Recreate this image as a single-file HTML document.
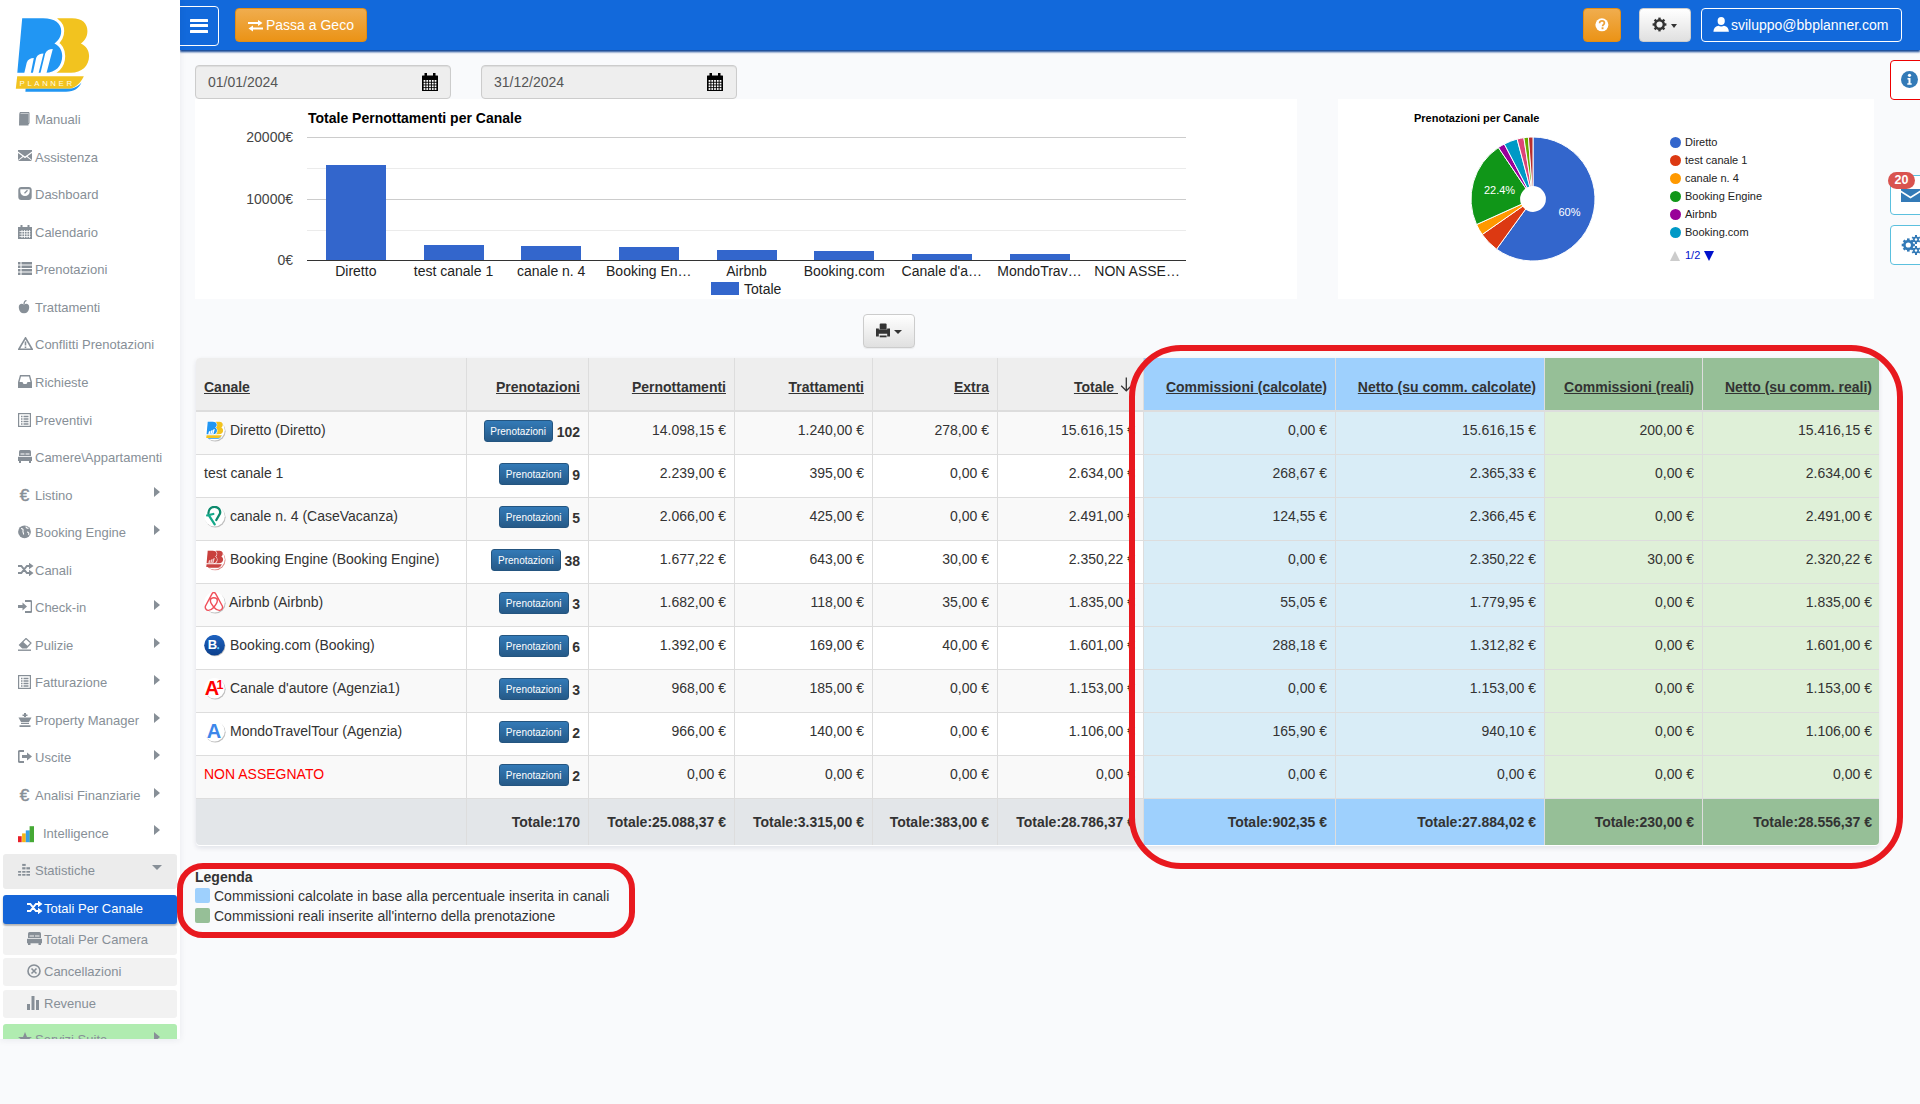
<!DOCTYPE html>
<html><head><meta charset="utf-8"><title>BB Planner</title>
<style>
*{box-sizing:border-box;}
html,body{margin:0;padding:0;}
body{width:1920px;height:1104px;overflow:hidden;position:relative;background:#f9fafc;font-family:"Liberation Sans",sans-serif;font-size:14px;color:#333;}
.abs{position:absolute;}
svg{display:block;}
#sb{position:absolute;left:0;top:0;width:180px;height:1039px;background:#fff;z-index:4;overflow:hidden;box-shadow:0 1px 7px rgba(20,30,60,0.07);}
.mi{position:absolute;left:0;width:180px;height:20px;font-size:13px;line-height:20px;color:#878f97;white-space:nowrap;}
.mi .ic{position:absolute;left:18px;top:2px;}
.mi .tx{position:absolute;left:35px;top:0;}
.mi .ch{position:absolute;left:154px;top:1.9px;width:0;height:0;border-left:6px solid #878f97;border-top:5.5px solid transparent;border-bottom:5.5px solid transparent;}
.sub{position:absolute;left:3px;width:174px;border-radius:3px;background:#f2f2f2;}
#tb{position:absolute;left:180px;top:0;width:1740px;height:50px;background:#1269db;box-shadow:0 2px 2px rgb(18,70,150);z-index:3;}
.btnw{border-radius:4px;background:linear-gradient(#f0ad4e,#eb9316);border:1px solid #e38d13;}
.btnd{border-radius:4px;background:linear-gradient(#fff,#e0e0e0);border:1px solid #ccc;}
</style></head><body>
<div id="sb">
<svg class="abs" style="left:0;top:0" width="100" height="100" viewBox="0 0 100 100">
<path d="M57.5 18.2 H72 C82.5 18.2 87.4 23.5 87.4 31 C87.4 37 84.5 41 80.9 43.4 C86 46 89.1 50 89.1 56 C89.1 66 81.5 72.8 71 72.8 H45 Z" fill="#f2c31f"/>
<path d="M22.2 18.2 H43 C55 18.2 61.2 23.5 61.2 31 C61.2 37 58 41 54.4 43.4 C59.5 46 62.2 50 62.2 56 C62.2 66 55.5 72.8 45.5 72.8 H17.3 Z" fill="#2196f3" stroke="#fff" stroke-width="6" stroke-linejoin="round"/>
<path d="M22.2 18.2 H43 C55 18.2 61.2 23.5 61.2 31 C61.2 37 58 41 54.4 43.4 C59.5 46 62.2 50 62.2 56 C62.2 66 55.5 72.8 45.5 72.8 H17.3 Z" fill="#2196f3"/>
<path d="M24.3 73 L26.7 62.7 C27.8 59.5 30.5 58.3 33.8 58.1 L30.8 73 Z M32.9 73 L36.2 57.8 C37.5 54.8 40.3 53.6 43.5 53.5 L38.6 73 Z M40.5 73 L45.2 53.5 C46.5 50.5 49.5 49.2 52.8 49.1 L46.5 73 Z" fill="#fff"/>
<path d="M17.2 76.3 H83.8 C80.5 83 76.5 87 70 88.8 H15.8 Z" fill="#f2c31f"/>
<path d="M25.6 88.8 H70 C75 88 79 85.5 81.5 82.5 C79 88 74.5 91.8 66 91.8 H25.4 Z" fill="#2196f3"/>
<text x="19.6" y="85.6" font-family="Liberation Sans" font-size="7.8" letter-spacing="2.6" fill="#fffbe8">PLANNER</text>
</svg>
<div class="mi" style="top:110.10px"><span class="ic" ><svg width="13" height="14" viewBox="0 0 13 14"><path d="M2 0.5h9v11h-9z" fill="none" stroke="#878f97" stroke-width="1"/><path d="M1.5 1.5 L1 13.5 h9.5 v-12z" fill="#878f97"/></svg></span><span class="tx" >Manuali</span></div>
<div class="mi" style="top:147.65px"><span class="ic" ><svg width="14" height="11" viewBox="0 0 14 11"><path d="M0 0h14v1.5l-7 5-7-5z" fill="#878f97"/><path d="M0 3l4.5 3.3L0 10zM14 3l-4.5 3.3L14 10zM0 11l5.3-4 1.7 1.2 1.7-1.2 5.3 4z" fill="#878f97"/></svg></span><span class="tx" >Assistenza</span></div>
<div class="mi" style="top:185.20px"><span class="ic" ><svg width="14" height="14" viewBox="0 0 14 14"><rect x="0.3" y="0" width="13.4" height="13" rx="3" fill="#878f97"/><path d="M2.3 2.3h9.4v2.5a4.7 4.2 0 0 1-9.4 0z" fill="#fff"/><path d="M6.5 6.2l3-3" stroke="#878f97" stroke-width="1.3"/></svg></span><span class="tx" >Dashboard</span></div>
<div class="mi" style="top:222.75px"><span class="ic" ><svg width="14" height="14" viewBox="0 0 14 14"><rect x="0" y="2" width="14" height="12" fill="#878f97"/><rect x="2.5" y="0" width="2" height="3" fill="#878f97"/><rect x="9.5" y="0" width="2" height="3" fill="#878f97"/><path d="M1.5 6.5h11M1.5 9h11M1.5 11.5h11M4 5v8M6.5 5v8M9 5v8M11.5 5v8" stroke="#fff" stroke-width="0.8"/></svg></span><span class="tx" >Calendario</span></div>
<div class="mi" style="top:260.30px"><span class="ic" ><svg width="14" height="13" viewBox="0 0 14 13"><path d="M0 0h2.5v2.5H0zM0 3.5h2.5V6H0zM0 7h2.5v2.5H0zM0 10.5h2.5V13H0z" fill="#878f97"/><path d="M3.5 0h10.5v2.5H3.5zM3.5 3.5h10.5V6H3.5zM3.5 7h10.5v2.5H3.5zM3.5 10.5h10.5V13H3.5z" fill="#878f97"/></svg></span><span class="tx" >Prenotazioni</span></div>
<div class="mi" style="top:297.85px"><span class="ic" ><svg width="12" height="14" viewBox="0 0 12 14"><path d="M6 4.5C4 3 0.5 3.5 0.8 7.5 1 11 3.5 14 6 13c2.5 1 5-2 5.2-5.5C11.5 3.5 8 3 6 4.5z" fill="#878f97"/><path d="M6 4.2C6 2 7 0.8 8.5 0.5" stroke="#878f97" stroke-width="1.2" fill="none"/></svg></span><span class="tx" >Trattamenti</span></div>
<div class="mi" style="top:335.40px"><span class="ic" ><svg width="15" height="13" viewBox="0 0 15 13"><path d="M7.5 0.8L0.8 12.3h13.4z" fill="none" stroke="#878f97" stroke-width="1.6"/><path d="M7.5 4.5v4M7.5 9.5v1.5" stroke="#878f97" stroke-width="1.6"/></svg></span><span class="tx" >Conflitti Prenotazioni</span></div>
<div class="mi" style="top:372.95px"><span class="ic" ><svg width="14" height="13" viewBox="0 0 14 13"><path d="M2 0h10l2 7v6H0V7z" fill="#878f97"/><path d="M3 1.5h8l1.5 5.5H9.5L8.5 9h-3l-1-2H1.5z" fill="#fff"/></svg></span><span class="tx" >Richieste</span></div>
<div class="mi" style="top:410.50px"><span class="ic" ><svg width="13" height="14" viewBox="0 0 13 14"><rect x="0.6" y="0.6" width="11.8" height="12.8" fill="none" stroke="#878f97" stroke-width="1.2"/><path d="M3 3.5h1.5M5.5 3.5h5M3 6h1.5M5.5 6h5M3 8.5h1.5M5.5 8.5h5M3 11h1.5M5.5 11h5" stroke="#878f97" stroke-width="1.3"/></svg></span><span class="tx" >Preventivi</span></div>
<div class="mi" style="top:448.05px"><span class="ic" ><svg width="14" height="13" viewBox="0 0 14 13"><path d="M1 1.5Q1 0 2.5 0h9Q13 0 13 1.5V6H1z" fill="#878f97"/><path d="M0 6.8h14v4.2H0z" fill="#878f97"/><path d="M1 11h2v2H1zM11 11h2v2h-2z" fill="#878f97"/><path d="M2.5 4h4M7.5 4h4" stroke="#fff" stroke-width="1"/></svg></span><span class="tx" >Camere\Appartamenti</span></div>
<div class="mi" style="top:485.60px"><span class="ic" ><svg width="14" height="15" viewBox="0 0 14 15"><text x="6.6" y="12.7" text-anchor="middle" font-family="Liberation Sans" font-size="17" stroke="#878f97" stroke-width="0.5" fill="#878f97">€</text></svg></span><span class="tx" >Listino</span><span class="ch"></span></div>
<div class="mi" style="top:523.15px"><span class="ic" ><svg width="14" height="14" viewBox="0 0 14 14"><circle cx="6.5" cy="6.8" r="6.4" fill="#878f97"/><path d="M3 3.5c1.5 0 2.5 1 2 2.5s1 2 0.5 3.5M8 1.5c0 1.5 1.5 2 2.5 1.5M9 7c1.5 0 2.5 1.5 1.5 3" stroke="#fff" stroke-width="1.1" fill="none"/></svg></span><span class="tx" >Booking Engine</span><span class="ch"></span></div>
<div class="mi" style="top:560.70px"><span class="ic" ><svg width="16" height="13" viewBox="0 0 16 13"><path d="M0 3h3.3l5.6 7h3M0 10h3.3l5.6-7h3" stroke="#878f97" stroke-width="2" fill="none"/><path d="M11 -0.3l4.5 3.3-4.5 3.3zM11 6.7l4.5 3.3-4.5 3.3z" fill="#878f97"/></svg></span><span class="tx" >Canali</span></div>
<div class="mi" style="top:598.25px"><span class="ic" ><svg width="14" height="13" viewBox="0 0 14 13"><path d="M7 1h5.5q1.2 0 1.2 1.2v8.6q0 1.2-1.2 1.2H7" stroke="#878f97" stroke-width="2" fill="none"/><path d="M0 5h4.5V2.5L9 6.5l-4.5 4V8H0z" fill="#878f97"/></svg></span><span class="tx" >Check-in</span><span class="ch"></span></div>
<div class="mi" style="top:635.80px"><span class="ic" ><svg width="14" height="13" viewBox="0 0 14 13"><path d="M8 0.5l5 4.5-4.5 5h-4L1.5 7z" fill="none" stroke="#878f97" stroke-width="1.2"/><path d="M1.5 7l3 3h4l1.5-1.7L5 3.8z" fill="#878f97"/><path d="M0 12.2h13" stroke="#878f97" stroke-width="1.4"/></svg></span><span class="tx" >Pulizie</span><span class="ch"></span></div>
<div class="mi" style="top:673.35px"><span class="ic" ><svg width="13" height="14" viewBox="0 0 13 14"><rect x="0.6" y="0.6" width="11.8" height="12.8" fill="none" stroke="#878f97" stroke-width="1.2"/><path d="M3 3.5h1.5M5.5 3.5h5M3 6h1.5M5.5 6h5M3 8.5h1.5M5.5 8.5h5M3 11h1.5M5.5 11h5" stroke="#878f97" stroke-width="1.3"/></svg></span><span class="tx" >Fatturazione</span><span class="ch"></span></div>
<div class="mi" style="top:710.90px"><span class="ic" ><svg width="14" height="14" viewBox="0 0 14 14"><path d="M6 0h2v1.5h1.5v1.5H8v1H6V3H4.5V1.5H6z" fill="#878f97"/><path d="M0.5 4.5h13l-2.5 4.5H3z" fill="#878f97"/><path d="M3 9.8h8v1.2H3zM1.5 12.3h11V14h-11z" fill="#878f97"/></svg></span><span class="tx" >Property Manager</span><span class="ch"></span></div>
<div class="mi" style="top:748.45px"><span class="ic" ><svg width="14" height="13" viewBox="0 0 14 13"><path d="M6 1H1.8Q0.7 1 0.7 2.2v8.6Q0.7 12 1.8 12H6" stroke="#878f97" stroke-width="1.8" fill="none"/><path d="M4 5h5V2.5l5 4-5 4V8H4z" fill="#878f97"/></svg></span><span class="tx" >Uscite</span><span class="ch"></span></div>
<div class="mi" style="top:786.00px"><span class="ic" ><svg width="14" height="15" viewBox="0 0 14 15"><text x="6.6" y="12.7" text-anchor="middle" font-family="Liberation Sans" font-size="17" stroke="#878f97" stroke-width="0.5" fill="#878f97">€</text></svg></span><span class="tx" >Analisi Finanziarie</span><span class="ch"></span></div>
<div class="mi" style="top:823.55px"><span class="ic" style="left:18px;top:2px"><svg width="17" height="17" viewBox="0 0 17 17"><path d="M0 10.2h3.7v6H0z" fill="#e8202a"/><path d="M4.1 7.4h3.7v8.8H4.1z" fill="#f7b515"/><path d="M7.8 4.4h4v11.8h-4z" fill="#3a9fe6"/><path d="M11.6 0.2h4.4v16h-4.4z" fill="#45a935"/></svg></span><span class="tx" style="left:43px">Intelligence</span><span class="ch"></span></div>
<div class="sub" style="top:854px;height:34.5px;background:#ececec"></div>
<div class="mi" style="top:861.10px"><span class="ic"><svg width="14" height="14" viewBox="0 0 14 14"><g fill="#878f97"><rect x="4.2" y="0.9" width="3.5" height="2"/><rect x="4.2" y="4.2" width="3.3" height="2.2"/><rect x="8.4" y="4.2" width="3.6" height="2.2"/><rect x="0.1" y="8" width="3" height="1.7"/><rect x="4.2" y="8" width="3.3" height="1.7"/><rect x="8.4" y="8" width="3.6" height="1.7"/><rect x="0.1" y="11" width="3" height="1.7"/><rect x="4.2" y="11" width="3.3" height="1.7"/><rect x="8.4" y="11" width="3.6" height="1.7"/></g></svg></span><span class="tx">Statistiche</span><span style="position:absolute;left:151.8px;top:4.3px;width:0;height:0;border-top:5.6px solid #878f97;border-left:5.1px solid transparent;border-right:5.1px solid transparent"></span></div>
<div class="sub" style="top:895.2px;height:28.5px;background:#1565d8;box-shadow:0 2px 2px rgba(0,0,0,0.3);"></div>
<div class="mi" style="top:898.95px;color:#fff"><span class="ic" style="left:27px"><svg width="16" height="13" viewBox="0 0 16 13"><path d="M0 3h3.3l5.6 7h3M0 10h3.3l5.6-7h3" stroke="#fff" stroke-width="2" fill="none"/><path d="M11 -0.3l4.5 3.3-4.5 3.3zM11 6.7l4.5 3.3-4.5 3.3z" fill="#fff"/></svg></span><span class="tx" style="left:44px">Totali Per Canale</span></div>
<div class="sub" style="top:926.5px;height:28.0px;background:#f2f2f2;"></div>
<div class="mi" style="top:930.25px;color:#878f97"><span class="ic" style="left:27px"><svg width="15" height="14" viewBox="0 0 15 14"><path d="M1 1.5Q1 0 2.5 0h10Q14 0 14 1.5V6H1z" fill="#878f97"/><path d="M0 6.8h15v4.5H0z" fill="#878f97"/><path d="M1 11h2.5v2H1zM11.5 11h2.5v2h-2.5z" fill="#878f97"/><path d="M2.5 4h4.5M8 4h4.5" stroke="#f2f2f2" stroke-width="1"/></svg></span><span class="tx" style="left:44px">Totali Per Camera</span></div>
<div class="sub" style="top:957.9px;height:28.5px;background:#f2f2f2;"></div>
<div class="mi" style="top:961.95px;color:#878f97"><span class="ic" style="left:27px"><svg width="14" height="14" viewBox="0 0 14 14"><circle cx="7" cy="7" r="6" fill="none" stroke="#878f97" stroke-width="1.6"/><path d="M4.5 4.5l5 5M9.5 4.5l-5 5" stroke="#878f97" stroke-width="1.6"/></svg></span><span class="tx" style="left:44px">Cancellazioni</span></div>
<div class="sub" style="top:989.9px;height:27.9px;background:#f2f2f2;"></div>
<div class="mi" style="top:994.15px;color:#878f97"><span class="ic" style="left:27px"><svg width="12" height="14" viewBox="0 0 12 14"><path d="M0 8h3v6H0zM4.5 0h3v14h-3zM9 4h3v10H9z" fill="#878f97"/></svg></span><span class="tx" style="left:44px">Revenue</span></div>
<div class="sub" style="top:1024px;height:20px;background:#b0ecb0"></div>
<div class="mi" style="top:1030.25px"><span class="ic"><svg width="14" height="14" viewBox="0 0 14 14"><path d="M7 0l2 5h5l-4 3 1.5 5L7 10l-4.5 3L4 8 0 5h5z" fill="#878f97"/></svg></span><span class="tx">Servizi Suite</span><span class="ch"></span></div>
</div>
<div id="tb">
<div class="abs" style="left:0;top:0;width:40px;height:50px;overflow:hidden"><div class="abs" style="left:-6px;top:6px;width:45px;height:40px;border:1px solid #fff;border-radius:4px"></div></div>
<div class="abs" style="left:10px;top:18.8px;width:18px;height:3px;background:#fff;border-radius:0.5px"></div>
<div class="abs" style="left:10px;top:24.1px;width:18px;height:3px;background:#fff;border-radius:0.5px"></div>
<div class="abs" style="left:10px;top:29.9px;width:18px;height:3px;background:#fff;border-radius:0.5px"></div>
<div class="abs btnw" style="left:55px;top:8px;width:132px;height:34px"></div>
<svg class="abs" style="left:67.5px;top:19.5px" width="15" height="12" viewBox="0 0 15 12"><path d="M0 3h11" stroke="#fff" stroke-width="2"/><path d="M10 0l4.5 3-4.5 3z" fill="#fff"/><path d="M4 8.5h11" stroke="#fff" stroke-width="2"/><path d="M5 5.5L0.5 8.5 5 11.5z" fill="#fff"/></svg>
<div class="abs" style="left:86px;top:16px;line-height:18px;color:#fff;font-size:14px">Passa a Geco</div>
<div class="abs btnw" style="left:1403px;top:8px;width:38px;height:34px"></div>
<svg class="abs" style="left:1415px;top:18px" width="14" height="14" viewBox="0 0 14 14"><circle cx="6.9" cy="6.8" r="6.5" fill="#fff"/><path d="M4.6 5.2C4.6 3.6 5.6 2.8 7 2.8S9.4 3.6 9.4 5C9.4 6.6 7.6 6.6 7.6 8.2" fill="none" stroke="#eda13a" stroke-width="1.7"/><rect x="6.6" y="9.3" width="1.9" height="1.9" fill="#eda13a"/></svg>
<div class="abs btnd" style="left:1459px;top:8px;width:52px;height:34px"></div>
<svg class="abs" style="left:1471.5px;top:16.5px" width="15" height="15" viewBox="0 0 15 15"><g transform="translate(7.5 7.5)"><circle r="4.3" fill="none" stroke="#333" stroke-width="2.4"/><rect x="-1.2" y="-6.9" width="2.4" height="3" fill="#333" transform="rotate(0)"/><rect x="-1.2" y="-6.9" width="2.4" height="3" fill="#333" transform="rotate(45)"/><rect x="-1.2" y="-6.9" width="2.4" height="3" fill="#333" transform="rotate(90)"/><rect x="-1.2" y="-6.9" width="2.4" height="3" fill="#333" transform="rotate(135)"/><rect x="-1.2" y="-6.9" width="2.4" height="3" fill="#333" transform="rotate(180)"/><rect x="-1.2" y="-6.9" width="2.4" height="3" fill="#333" transform="rotate(225)"/><rect x="-1.2" y="-6.9" width="2.4" height="3" fill="#333" transform="rotate(270)"/><rect x="-1.2" y="-6.9" width="2.4" height="3" fill="#333" transform="rotate(315)"/></g></svg>
<div class="abs" style="left:1490.5px;top:23.8px;width:0;height:0;border-top:4.2px solid #333;border-left:3.9px solid transparent;border-right:3.9px solid transparent"></div>
<div class="abs" style="left:1521px;top:8px;width:201px;height:34px;border:1px solid #fff;border-radius:4px"></div>
<svg class="abs" style="left:1532.5px;top:16.5px" width="16" height="15" viewBox="0 0 16 15"><ellipse cx="8.2" cy="4" rx="3.6" ry="4" fill="#fff"/><path d="M0.4 14.8c0.3-3.2 1.6-5.3 5-6 1.5 0.9 4 0.9 5.6 0 3.4 0.7 4.6 2.8 4.9 6z" fill="#fff"/></svg>
<div class="abs" style="left:1551px;top:16px;line-height:18px;color:#fff;font-size:14px">sviluppo@bbplanner.com</div>
</div>
<style>
.td{overflow:hidden;white-space:nowrap;}
.th{position:absolute;right:8px;line-height:18px;font-weight:bold;font-size:14px;color:#333;}
.td .th{}
.tdt{position:absolute;top:9px;line-height:18px;font-size:14px;color:#333;}
.tdr{position:absolute;right:8px;top:9px;line-height:18px;font-size:14px;color:#333;}
.tdb{position:absolute;right:8px;top:14px;line-height:18px;font-size:14px;font-weight:bold;color:#333;}
.chic{position:absolute;}
.pbtn{position:absolute;top:8px;height:21.5px;padding:0 6.2px 0 5.6px;line-height:21px;font-size:10px;color:#fff;border-radius:3px;background:linear-gradient(#337ab7,#265a88);border:1px solid #245580;}
.num{position:absolute;right:8px;top:10.5px;line-height:18px;font-weight:bold;font-size:14px;color:#333;}
.arr{font-weight:normal;font-size:16px;}
</style>
<div class="abs" style="left:195px;top:65px;width:256px;height:34px;background:#eee;border:1px solid #ccc;border-radius:4px;box-shadow:inset 0 1px 1px rgba(0,0,0,.075)"></div>
<div class="abs" style="left:208px;top:73px;line-height:18px;color:#555;font-size:14px">01/01/2024</div>
<svg class="abs" style="left:422px;top:73px" width="16" height="18" viewBox="0 0 16 18"><rect x="0" y="2.5" width="16" height="15.5" fill="#000" rx="0.5"/><rect x="2.5" y="0" width="2.5" height="4" fill="#000"/><rect x="11" y="0" width="2.5" height="4" fill="#000"/><g fill="#fff"><rect x="1.60" y="7.00" width="1.8" height="1.8"/><rect x="4.35" y="7.00" width="1.8" height="1.8"/><rect x="7.10" y="7.00" width="1.8" height="1.8"/><rect x="9.85" y="7.00" width="1.8" height="1.8"/><rect x="12.60" y="7.00" width="1.8" height="1.8"/><rect x="1.60" y="9.70" width="1.8" height="1.8"/><rect x="4.35" y="9.70" width="1.8" height="1.8"/><rect x="7.10" y="9.70" width="1.8" height="1.8"/><rect x="9.85" y="9.70" width="1.8" height="1.8"/><rect x="12.60" y="9.70" width="1.8" height="1.8"/><rect x="1.60" y="12.40" width="1.8" height="1.8"/><rect x="4.35" y="12.40" width="1.8" height="1.8"/><rect x="7.10" y="12.40" width="1.8" height="1.8"/><rect x="9.85" y="12.40" width="1.8" height="1.8"/><rect x="12.60" y="12.40" width="1.8" height="1.8"/><rect x="1.60" y="15.10" width="1.8" height="1.8"/><rect x="4.35" y="15.10" width="1.8" height="1.8"/><rect x="7.10" y="15.10" width="1.8" height="1.8"/><rect x="9.85" y="15.10" width="1.8" height="1.8"/><rect x="12.60" y="15.10" width="1.8" height="1.8"/></g></svg>
<div class="abs" style="left:481px;top:65px;width:256px;height:34px;background:#eee;border:1px solid #ccc;border-radius:4px;box-shadow:inset 0 1px 1px rgba(0,0,0,.075)"></div>
<div class="abs" style="left:494px;top:73px;line-height:18px;color:#555;font-size:14px">31/12/2024</div>
<svg class="abs" style="left:707px;top:73px" width="16" height="18" viewBox="0 0 16 18"><rect x="0" y="2.5" width="16" height="15.5" fill="#000" rx="0.5"/><rect x="2.5" y="0" width="2.5" height="4" fill="#000"/><rect x="11" y="0" width="2.5" height="4" fill="#000"/><g fill="#fff"><rect x="1.60" y="7.00" width="1.8" height="1.8"/><rect x="4.35" y="7.00" width="1.8" height="1.8"/><rect x="7.10" y="7.00" width="1.8" height="1.8"/><rect x="9.85" y="7.00" width="1.8" height="1.8"/><rect x="12.60" y="7.00" width="1.8" height="1.8"/><rect x="1.60" y="9.70" width="1.8" height="1.8"/><rect x="4.35" y="9.70" width="1.8" height="1.8"/><rect x="7.10" y="9.70" width="1.8" height="1.8"/><rect x="9.85" y="9.70" width="1.8" height="1.8"/><rect x="12.60" y="9.70" width="1.8" height="1.8"/><rect x="1.60" y="12.40" width="1.8" height="1.8"/><rect x="4.35" y="12.40" width="1.8" height="1.8"/><rect x="7.10" y="12.40" width="1.8" height="1.8"/><rect x="9.85" y="12.40" width="1.8" height="1.8"/><rect x="12.60" y="12.40" width="1.8" height="1.8"/><rect x="1.60" y="15.10" width="1.8" height="1.8"/><rect x="4.35" y="15.10" width="1.8" height="1.8"/><rect x="7.10" y="15.10" width="1.8" height="1.8"/><rect x="9.85" y="15.10" width="1.8" height="1.8"/><rect x="12.60" y="15.10" width="1.8" height="1.8"/></g></svg>
<div class="abs" style="left:195px;top:99px;width:1102px;height:200px;background:#fff"></div>
<div class="abs" style="left:308px;top:110px;line-height:16px;font-weight:bold;font-size:14px;color:#000">Totale Pernottamenti per Canale</div>
<div class="abs" style="left:307px;top:137px;width:879px;height:1px;background:#cccccc"></div>
<div class="abs" style="left:307px;top:168px;width:879px;height:1px;background:#ebebeb"></div>
<div class="abs" style="left:307px;top:199px;width:879px;height:1px;background:#cccccc"></div>
<div class="abs" style="left:307px;top:230px;width:879px;height:1px;background:#ebebeb"></div>
<div class="abs" style="left:193px;width:100px;text-align:right;top:128px;line-height:18px;color:#444;font-size:14px">20000€</div>
<div class="abs" style="left:193px;width:100px;text-align:right;top:190px;line-height:18px;color:#444;font-size:14px">10000€</div>
<div class="abs" style="left:193px;width:100px;text-align:right;top:251px;line-height:18px;color:#444;font-size:14px">0€</div>
<div class="abs" style="left:325.83px;top:165px;width:60px;height:95px;background:#3366cc"></div>
<div class="abs" style="left:295.83px;width:120px;text-align:center;top:262px;line-height:18px;color:#222;font-size:14px">Diretto</div>
<div class="abs" style="left:423.50px;top:245px;width:60px;height:15px;background:#3366cc"></div>
<div class="abs" style="left:393.50px;width:120px;text-align:center;top:262px;line-height:18px;color:#222;font-size:14px">test canale 1</div>
<div class="abs" style="left:521.17px;top:246px;width:60px;height:14px;background:#3366cc"></div>
<div class="abs" style="left:491.17px;width:120px;text-align:center;top:262px;line-height:18px;color:#222;font-size:14px">canale n. 4</div>
<div class="abs" style="left:618.83px;top:247px;width:60px;height:13px;background:#3366cc"></div>
<div class="abs" style="left:588.83px;width:120px;text-align:center;top:262px;line-height:18px;color:#222;font-size:14px">Booking En…</div>
<div class="abs" style="left:716.50px;top:250px;width:60px;height:10px;background:#3366cc"></div>
<div class="abs" style="left:686.50px;width:120px;text-align:center;top:262px;line-height:18px;color:#222;font-size:14px">Airbnb</div>
<div class="abs" style="left:814.17px;top:251px;width:60px;height:9px;background:#3366cc"></div>
<div class="abs" style="left:784.17px;width:120px;text-align:center;top:262px;line-height:18px;color:#222;font-size:14px">Booking.com</div>
<div class="abs" style="left:911.83px;top:254px;width:60px;height:6px;background:#3366cc"></div>
<div class="abs" style="left:881.83px;width:120px;text-align:center;top:262px;line-height:18px;color:#222;font-size:14px">Canale d'a…</div>
<div class="abs" style="left:1009.50px;top:254px;width:60px;height:6px;background:#3366cc"></div>
<div class="abs" style="left:979.50px;width:120px;text-align:center;top:262px;line-height:18px;color:#222;font-size:14px">MondoTrav…</div>
<div class="abs" style="left:1077.17px;width:120px;text-align:center;top:262px;line-height:18px;color:#222;font-size:14px">NON ASSE…</div>
<div class="abs" style="left:307px;top:260px;width:879px;height:1px;background:#333"></div>
<div class="abs" style="left:711px;top:282px;width:28px;height:13px;background:#3366cc"></div>
<div class="abs" style="left:744px;top:280px;line-height:18px;color:#222;font-size:14px">Totale</div>
<div class="abs" style="left:1338px;top:99px;width:536px;height:200px;background:#fff"></div>
<div class="abs" style="left:1414px;top:112px;line-height:13px;font-weight:bold;font-size:11px;color:#000">Prenotazioni per Canale</div>
<svg class="abs" style="left:1470.3px;top:135.8px" width="126.0" height="126.0" viewBox="-63 -63 126 126"><path d="M0 0 L0.000 -62.000 A62 62 0 1 1 -36.443 50.159 Z" fill="#3366cc" stroke="#fff" stroke-width="1"/><path d="M0 0 L-36.443 50.159 A62 62 0 0 1 -50.824 35.510 Z" fill="#dc3912" stroke="#fff" stroke-width="1"/><path d="M0 0 L-50.824 35.510 A62 62 0 0 1 -56.483 25.566 Z" fill="#ff9900" stroke="#fff" stroke-width="1"/><path d="M0 0 L-56.483 25.566 A62 62 0 0 1 -34.564 -51.471 Z" fill="#109618" stroke="#fff" stroke-width="1"/><path d="M0 0 L-34.564 -51.471 A62 62 0 0 1 -28.657 -54.980 Z" fill="#990099" stroke="#fff" stroke-width="1"/><path d="M0 0 L-28.657 -54.980 A62 62 0 0 1 -15.862 -59.937 Z" fill="#0099c6" stroke="#fff" stroke-width="1"/><path d="M0 0 L-15.862 -59.937 A62 62 0 0 1 -9.133 -61.324 Z" fill="#dd4477" stroke="#fff" stroke-width="1"/><path d="M0 0 L-9.133 -61.324 A62 62 0 0 1 -4.579 -61.831 Z" fill="#66aa00" stroke="#fff" stroke-width="1"/><path d="M0 0 L-4.579 -61.831 A62 62 0 0 1 -0.000 -62.000 Z" fill="#b82e2e" stroke="#fff" stroke-width="1"/><circle r="12.9" fill="#fff"/><text x="36.5" y="16.5" text-anchor="middle" font-family="Liberation Sans" font-size="11" fill="#fff">60%</text><text x="-33.5" y="-5.5" text-anchor="middle" font-family="Liberation Sans" font-size="11" fill="#fff">22.4%</text></svg>
<div class="abs" style="left:1670px;top:137.20px;width:11px;height:11px;border-radius:50%;background:#3366cc"></div>
<div class="abs" style="left:1685px;top:136.20px;line-height:13px;font-size:11px;color:#222">Diretto</div>
<div class="abs" style="left:1670px;top:155.22px;width:11px;height:11px;border-radius:50%;background:#dc3912"></div>
<div class="abs" style="left:1685px;top:154.22px;line-height:13px;font-size:11px;color:#222">test canale 1</div>
<div class="abs" style="left:1670px;top:173.24px;width:11px;height:11px;border-radius:50%;background:#ff9900"></div>
<div class="abs" style="left:1685px;top:172.24px;line-height:13px;font-size:11px;color:#222">canale n. 4</div>
<div class="abs" style="left:1670px;top:191.26px;width:11px;height:11px;border-radius:50%;background:#109618"></div>
<div class="abs" style="left:1685px;top:190.26px;line-height:13px;font-size:11px;color:#222">Booking Engine</div>
<div class="abs" style="left:1670px;top:209.28px;width:11px;height:11px;border-radius:50%;background:#990099"></div>
<div class="abs" style="left:1685px;top:208.28px;line-height:13px;font-size:11px;color:#222">Airbnb</div>
<div class="abs" style="left:1670px;top:227.30px;width:11px;height:11px;border-radius:50%;background:#0099c6"></div>
<div class="abs" style="left:1685px;top:226.30px;line-height:13px;font-size:11px;color:#222">Booking.com</div>
<div class="abs" style="left:1670px;top:251px;width:0;height:0;border-bottom:10px solid #ccc;border-left:5.5px solid transparent;border-right:5.5px solid transparent"></div>
<div class="abs" style="left:1685px;top:248.5px;line-height:13px;font-size:11px;color:#0011cc">1/2</div>
<div class="abs" style="left:1704px;top:251px;width:0;height:0;border-top:10px solid #0011cc;border-left:5.5px solid transparent;border-right:5.5px solid transparent"></div>
<div class="abs btnd" style="left:863px;top:314px;width:52px;height:34px;box-shadow:0 1px 1px rgba(0,0,0,.06)"></div>
<svg class="abs" style="left:876px;top:322.5px" width="14" height="15" viewBox="0 0 14 15"><path d="M3.7 6.5V1.5Q3.7 0.5 4.7 0.5H9.6Q10.6 0.5 10.6 1.5V6.5z" fill="#333"/><path d="M0 5.6h2.8v7.8H0zM11.2 5.6H14v7.8h-2.8zM2.8 6.5h8.4v4.2H2.8z" fill="#333"/><path d="M3.7 12.5h6.9v1.8H3.7z" fill="#333"/></svg>
<div class="abs" style="left:894px;top:330px;width:0;height:0;border-top:4px solid #333;border-left:4px solid transparent;border-right:4px solid transparent"></div>
<div class="abs" style="left:196px;top:358px;width:1683px;height:488px;border-radius:4px;background:#fff;box-shadow:0 2px 5px rgba(0,20,60,0.10)"></div>
<div class="abs" style="left:196px;top:358px;width:1683px;height:487px;border-radius:4px;overflow:hidden">
<div class="abs td" style="left:0px;top:0px;width:270px;height:52px;background:#eeeeee;text-align:left;"><span class="th" style="top:20px;left:8px"><u>Canale</u></span></div>
<div class="abs td" style="left:271px;top:0px;width:121px;height:52px;background:#eeeeee;text-align:right;"><span class="th" style="top:20px;right:8px"><u>Prenotazioni</u></span></div>
<div class="abs td" style="left:393px;top:0px;width:145px;height:52px;background:#eeeeee;text-align:right;"><span class="th" style="top:20px;right:8px"><u>Pernottamenti</u></span></div>
<div class="abs td" style="left:539px;top:0px;width:137px;height:52px;background:#eeeeee;text-align:right;"><span class="th" style="top:20px;right:8px"><u>Trattamenti</u></span></div>
<div class="abs td" style="left:677px;top:0px;width:124px;height:52px;background:#eeeeee;text-align:right;"><span class="th" style="top:20px;right:8px"><u>Extra</u></span></div>
<div class="abs td" style="left:802px;top:0px;width:145px;height:52px;background:#eeeeee;text-align:right;"><span class="th" style="top:20px;right:25px"><u>Totale&nbsp;</u></span></div>
<div class="abs td" style="left:948px;top:0px;width:191px;height:52px;background:#9ed0fd;text-align:right;"><span class="th" style="top:20px;right:8px"><u>Commissioni (calcolate)</u></span></div>
<div class="abs td" style="left:1140px;top:0px;width:208px;height:52px;background:#9ed0fd;text-align:right;"><span class="th" style="top:20px;right:8px"><u>Netto (su comm. calcolate)</u></span></div>
<div class="abs td" style="left:1349px;top:0px;width:157px;height:52px;background:#96bf97;text-align:right;"><span class="th" style="top:20px;right:8px"><u>Commissioni (reali)</u></span></div>
<div class="abs td" style="left:1507px;top:0px;width:177px;height:52px;background:#96bf97;text-align:right;"><span class="th" style="top:20px;right:8px"><u>Netto (su comm. reali)</u></span></div>
<div class="abs" style="left:0;top:52px;width:1683px;height:2px;background:#dddddd"></div>
<div class="abs" style="left:270px;top:0;width:1px;height:487px;background:#dddddd"></div>
<div class="abs" style="left:392px;top:0;width:1px;height:487px;background:#dddddd"></div>
<div class="abs" style="left:538px;top:0;width:1px;height:487px;background:#dddddd"></div>
<div class="abs" style="left:676px;top:0;width:1px;height:487px;background:#dddddd"></div>
<div class="abs" style="left:801px;top:0;width:1px;height:487px;background:#dddddd"></div>
<div class="abs" style="left:947px;top:0;width:1px;height:487px;background:#dddddd"></div>
<div class="abs" style="left:1139px;top:0;width:1px;height:487px;background:#dddddd"></div>
<div class="abs" style="left:1348px;top:0;width:1px;height:487px;background:#dddddd"></div>
<div class="abs" style="left:1506px;top:0;width:1px;height:487px;background:#dddddd"></div>
<div class="abs td" style="left:0px;top:54px;width:270px;height:42px;background:#f9f9f9;text-align:left;"><span class="chic" style="left:8px;top:8px"><svg width="24" height="24" viewBox="0 0 24 24"><circle cx="11.3" cy="11.2" r="10.3" fill="#a9a9a9" opacity="0.75"/><circle cx="10.5" cy="10.2" r="10.3" fill="#fff"/><g transform="translate(-1.38 -2.39) scale(0.23)"><path d="M57.5 18.2 H72 C82.5 18.2 87.4 23.5 87.4 31 C87.4 37 84.5 41 80.9 43.4 C86 46 89.1 50 89.1 56 C89.1 66 81.5 72.8 71 72.8 H45 Z" fill="#f2c31f"/><path d="M22.2 18.2 H43 C55 18.2 61.2 23.5 61.2 31 C61.2 37 58 41 54.4 43.4 C59.5 46 62.2 50 62.2 56 C62.2 66 55.5 72.8 45.5 72.8 H17.3 Z" fill="#2196f3" stroke="#fff" stroke-width="5"/><path d="M22.2 18.2 H43 C55 18.2 61.2 23.5 61.2 31 C61.2 37 58 41 54.4 43.4 C59.5 46 62.2 50 62.2 56 C62.2 66 55.5 72.8 45.5 72.8 H17.3 Z" fill="#2196f3"/><path d="M24.3 73 L26.7 62.7 C27.8 59.5 30.5 58.3 33.8 58.1 L30.8 73 Z M32.9 73 L36.2 57.8 C37.5 54.8 40.3 53.6 43.5 53.5 L38.6 73 Z M40.5 73 L45.2 53.5 C46.5 50.5 49.5 49.2 52.8 49.1 L46.5 73 Z" fill="#fff"/><path d="M17.2 76.3 H83.8 C80.5 83 76.5 87 70 88.8 H15.8 Z" fill="#f2c31f"/><path d="M25.6 88.8 H70 C75 88 79 85.5 81.5 82.5 C79 88 74.5 91.8 66 91.8 H25.4 Z" fill="#2196f3"/></g></svg></span><span class="tdt" style="left:34px">Diretto (Diretto)</span></div>
<div class="abs td" style="left:271px;top:54px;width:121px;height:42px;background:#f9f9f9;text-align:right;"><span class="pbtn" style="right:34.95px">Prenotazioni</span><span class="num">102</span></div>
<div class="abs td" style="left:393px;top:54px;width:145px;height:42px;background:#f9f9f9;text-align:right;"><span class="tdr">14.098,15 €</span></div>
<div class="abs td" style="left:539px;top:54px;width:137px;height:42px;background:#f9f9f9;text-align:right;"><span class="tdr">1.240,00 €</span></div>
<div class="abs td" style="left:677px;top:54px;width:124px;height:42px;background:#f9f9f9;text-align:right;"><span class="tdr">278,00 €</span></div>
<div class="abs td" style="left:802px;top:54px;width:145px;height:42px;background:#f9f9f9;text-align:right;"><span class="tdr">15.616,15 €</span></div>
<div class="abs td" style="left:948px;top:54px;width:191px;height:42px;background:#d9edf7;text-align:right;"><span class="tdr">0,00 €</span></div>
<div class="abs td" style="left:1140px;top:54px;width:208px;height:42px;background:#d9edf7;text-align:right;"><span class="tdr">15.616,15 €</span></div>
<div class="abs td" style="left:1349px;top:54px;width:157px;height:42px;background:#dff0d8;text-align:right;"><span class="tdr">200,00 €</span></div>
<div class="abs td" style="left:1507px;top:54px;width:177px;height:42px;background:#dff0d8;text-align:right;"><span class="tdr">15.416,15 €</span></div>
<div class="abs" style="left:0;top:96px;width:1683px;height:1px;background:#dddddd"></div>
<div class="abs td" style="left:0px;top:97px;width:270px;height:42px;background:#ffffff;text-align:left;"><span class="tdt" style="left:8px">test canale 1</span></div>
<div class="abs td" style="left:271px;top:97px;width:121px;height:42px;background:#ffffff;text-align:right;"><span class="pbtn" style="right:19.39px">Prenotazioni</span><span class="num">9</span></div>
<div class="abs td" style="left:393px;top:97px;width:145px;height:42px;background:#ffffff;text-align:right;"><span class="tdr">2.239,00 €</span></div>
<div class="abs td" style="left:539px;top:97px;width:137px;height:42px;background:#ffffff;text-align:right;"><span class="tdr">395,00 €</span></div>
<div class="abs td" style="left:677px;top:97px;width:124px;height:42px;background:#ffffff;text-align:right;"><span class="tdr">0,00 €</span></div>
<div class="abs td" style="left:802px;top:97px;width:145px;height:42px;background:#ffffff;text-align:right;"><span class="tdr">2.634,00 €</span></div>
<div class="abs td" style="left:948px;top:97px;width:191px;height:42px;background:#d9edf7;text-align:right;"><span class="tdr">268,67 €</span></div>
<div class="abs td" style="left:1140px;top:97px;width:208px;height:42px;background:#d9edf7;text-align:right;"><span class="tdr">2.365,33 €</span></div>
<div class="abs td" style="left:1349px;top:97px;width:157px;height:42px;background:#dff0d8;text-align:right;"><span class="tdr">0,00 €</span></div>
<div class="abs td" style="left:1507px;top:97px;width:177px;height:42px;background:#dff0d8;text-align:right;"><span class="tdr">2.634,00 €</span></div>
<div class="abs" style="left:0;top:139px;width:1683px;height:1px;background:#dddddd"></div>
<div class="abs td" style="left:0px;top:140px;width:270px;height:42px;background:#f9f9f9;text-align:left;"><span class="chic" style="left:8px;top:8px"><svg width="24" height="24" viewBox="0 0 24 24"><circle cx="11.3" cy="11.2" r="10.3" fill="#a9a9a9" opacity="0.75"/><circle cx="10.5" cy="10.2" r="10.3" fill="#fff"/><g fill="none" stroke-linecap="round" stroke-width="2.3"><path d="M12.3 14 L16 7.5 C17 4 14 0.8 10.4 0.9 C6.8 1 4.5 3.8 4.4 7.3" stroke="#0e8a6d"/><path d="M3.2 9.4 L9.3 8" stroke="#15a98a"/><path d="M5.2 9.9 L10.7 18.3" stroke="#15a98a"/></g></svg></span><span class="tdt" style="left:34px">canale n. 4 (CaseVacanza)</span></div>
<div class="abs td" style="left:271px;top:140px;width:121px;height:42px;background:#f9f9f9;text-align:right;"><span class="pbtn" style="right:19.39px">Prenotazioni</span><span class="num">5</span></div>
<div class="abs td" style="left:393px;top:140px;width:145px;height:42px;background:#f9f9f9;text-align:right;"><span class="tdr">2.066,00 €</span></div>
<div class="abs td" style="left:539px;top:140px;width:137px;height:42px;background:#f9f9f9;text-align:right;"><span class="tdr">425,00 €</span></div>
<div class="abs td" style="left:677px;top:140px;width:124px;height:42px;background:#f9f9f9;text-align:right;"><span class="tdr">0,00 €</span></div>
<div class="abs td" style="left:802px;top:140px;width:145px;height:42px;background:#f9f9f9;text-align:right;"><span class="tdr">2.491,00 €</span></div>
<div class="abs td" style="left:948px;top:140px;width:191px;height:42px;background:#d9edf7;text-align:right;"><span class="tdr">124,55 €</span></div>
<div class="abs td" style="left:1140px;top:140px;width:208px;height:42px;background:#d9edf7;text-align:right;"><span class="tdr">2.366,45 €</span></div>
<div class="abs td" style="left:1349px;top:140px;width:157px;height:42px;background:#dff0d8;text-align:right;"><span class="tdr">0,00 €</span></div>
<div class="abs td" style="left:1507px;top:140px;width:177px;height:42px;background:#dff0d8;text-align:right;"><span class="tdr">2.491,00 €</span></div>
<div class="abs" style="left:0;top:182px;width:1683px;height:1px;background:#dddddd"></div>
<div class="abs td" style="left:0px;top:183px;width:270px;height:42px;background:#ffffff;text-align:left;"><span class="chic" style="left:8px;top:8px"><svg width="24" height="24" viewBox="0 0 24 24"><circle cx="11.2" cy="11" r="10.3" fill="#d46a68" opacity="0.8"/><circle cx="10.5" cy="10.2" r="10.3" fill="#fff"/><g transform="translate(-1.38 -2.39) scale(0.23)"><path d="M57.5 18.2 H72 C82.5 18.2 87.4 23.5 87.4 31 C87.4 37 84.5 41 80.9 43.4 C86 46 89.1 50 89.1 56 C89.1 66 81.5 72.8 71 72.8 H45 Z" fill="#c94442"/><path d="M22.2 18.2 H43 C55 18.2 61.2 23.5 61.2 31 C61.2 37 58 41 54.4 43.4 C59.5 46 62.2 50 62.2 56 C62.2 66 55.5 72.8 45.5 72.8 H17.3 Z" fill="#c9403d" stroke="#fff" stroke-width="5"/><path d="M22.2 18.2 H43 C55 18.2 61.2 23.5 61.2 31 C61.2 37 58 41 54.4 43.4 C59.5 46 62.2 50 62.2 56 C62.2 66 55.5 72.8 45.5 72.8 H17.3 Z" fill="#c9403d"/><path d="M24.3 73 L26.7 62.7 C27.8 59.5 30.5 58.3 33.8 58.1 L30.8 73 Z M32.9 73 L36.2 57.8 C37.5 54.8 40.3 53.6 43.5 53.5 L38.6 73 Z M40.5 73 L45.2 53.5 C46.5 50.5 49.5 49.2 52.8 49.1 L46.5 73 Z" fill="#f3caca"/><path d="M17.2 76.3 H83.8 C80.5 83 76.5 87 70 88.8 H15.8 Z" fill="#c94442"/><path d="M25.6 88.8 H70 C75 88 79 85.5 81.5 82.5 C79 88 74.5 91.8 66 91.8 H25.4 Z" fill="#c9403d"/></g></svg></span><span class="tdt" style="left:34px">Booking Engine (Booking Engine)</span></div>
<div class="abs td" style="left:271px;top:183px;width:121px;height:42px;background:#ffffff;text-align:right;"><span class="pbtn" style="right:27.17px">Prenotazioni</span><span class="num">38</span></div>
<div class="abs td" style="left:393px;top:183px;width:145px;height:42px;background:#ffffff;text-align:right;"><span class="tdr">1.677,22 €</span></div>
<div class="abs td" style="left:539px;top:183px;width:137px;height:42px;background:#ffffff;text-align:right;"><span class="tdr">643,00 €</span></div>
<div class="abs td" style="left:677px;top:183px;width:124px;height:42px;background:#ffffff;text-align:right;"><span class="tdr">30,00 €</span></div>
<div class="abs td" style="left:802px;top:183px;width:145px;height:42px;background:#ffffff;text-align:right;"><span class="tdr">2.350,22 €</span></div>
<div class="abs td" style="left:948px;top:183px;width:191px;height:42px;background:#d9edf7;text-align:right;"><span class="tdr">0,00 €</span></div>
<div class="abs td" style="left:1140px;top:183px;width:208px;height:42px;background:#d9edf7;text-align:right;"><span class="tdr">2.350,22 €</span></div>
<div class="abs td" style="left:1349px;top:183px;width:157px;height:42px;background:#dff0d8;text-align:right;"><span class="tdr">30,00 €</span></div>
<div class="abs td" style="left:1507px;top:183px;width:177px;height:42px;background:#dff0d8;text-align:right;"><span class="tdr">2.320,22 €</span></div>
<div class="abs" style="left:0;top:225px;width:1683px;height:1px;background:#dddddd"></div>
<div class="abs td" style="left:0px;top:226px;width:270px;height:42px;background:#f9f9f9;text-align:left;"><span class="chic" style="left:8px;top:8px"><svg width="24" height="24" viewBox="0 0 24 24"><circle cx="11.3" cy="11.2" r="10.3" fill="#a9a9a9" opacity="0.75"/><circle cx="10.5" cy="10.2" r="10.3" fill="#fff"/><path d="M4.4 18.4 C2.5 18.5 0.6 16.5 1.5 14 L8 1.8 C9 0 10.7 0 11.7 1.8 L18.3 14 C19.2 16.5 17.2 18.5 15.2 18.4 C13 18.3 11 16.5 9.86 15.2 C8 13 6.4 10.5 6.4 8.8 C6.4 6.8 8 5.8 9.86 5.8 C11.7 5.8 13.3 6.8 13.3 8.8 C13.3 10.5 11.7 13 9.86 15.2 C8.7 16.5 6.7 18.3 4.4 18.4 Z" fill="none" stroke="#f0505a" stroke-width="1.4"/></svg></span><span class="tdt" style="left:33px">Airbnb (Airbnb)</span></div>
<div class="abs td" style="left:271px;top:226px;width:121px;height:42px;background:#f9f9f9;text-align:right;"><span class="pbtn" style="right:19.39px">Prenotazioni</span><span class="num">3</span></div>
<div class="abs td" style="left:393px;top:226px;width:145px;height:42px;background:#f9f9f9;text-align:right;"><span class="tdr">1.682,00 €</span></div>
<div class="abs td" style="left:539px;top:226px;width:137px;height:42px;background:#f9f9f9;text-align:right;"><span class="tdr">118,00 €</span></div>
<div class="abs td" style="left:677px;top:226px;width:124px;height:42px;background:#f9f9f9;text-align:right;"><span class="tdr">35,00 €</span></div>
<div class="abs td" style="left:802px;top:226px;width:145px;height:42px;background:#f9f9f9;text-align:right;"><span class="tdr">1.835,00 €</span></div>
<div class="abs td" style="left:948px;top:226px;width:191px;height:42px;background:#d9edf7;text-align:right;"><span class="tdr">55,05 €</span></div>
<div class="abs td" style="left:1140px;top:226px;width:208px;height:42px;background:#d9edf7;text-align:right;"><span class="tdr">1.779,95 €</span></div>
<div class="abs td" style="left:1349px;top:226px;width:157px;height:42px;background:#dff0d8;text-align:right;"><span class="tdr">0,00 €</span></div>
<div class="abs td" style="left:1507px;top:226px;width:177px;height:42px;background:#dff0d8;text-align:right;"><span class="tdr">1.835,00 €</span></div>
<div class="abs" style="left:0;top:268px;width:1683px;height:1px;background:#dddddd"></div>
<div class="abs td" style="left:0px;top:269px;width:270px;height:42px;background:#ffffff;text-align:left;"><span class="chic" style="left:8px;top:8px"><svg width="24" height="24" viewBox="0 0 24 24"><defs><linearGradient id="bkg" x1="0" y1="0" x2="0" y2="1"><stop offset="0" stop-color="#1f63c0"/><stop offset="1" stop-color="#0b3f8c"/></linearGradient></defs><circle cx="11.1" cy="11" r="10.3" fill="#a9a9a9" opacity="0.7"/><circle cx="10.5" cy="10.2" r="10.3" fill="url(#bkg)"/><text x="8.4" y="14.1" text-anchor="middle" font-family="Liberation Sans" font-weight="bold" font-size="13" fill="#fff">B</text><circle cx="14.2" cy="13.2" r="1.1" fill="#5bd0ff"/></svg></span><span class="tdt" style="left:34px">Booking.com (Booking)</span></div>
<div class="abs td" style="left:271px;top:269px;width:121px;height:42px;background:#ffffff;text-align:right;"><span class="pbtn" style="right:19.39px">Prenotazioni</span><span class="num">6</span></div>
<div class="abs td" style="left:393px;top:269px;width:145px;height:42px;background:#ffffff;text-align:right;"><span class="tdr">1.392,00 €</span></div>
<div class="abs td" style="left:539px;top:269px;width:137px;height:42px;background:#ffffff;text-align:right;"><span class="tdr">169,00 €</span></div>
<div class="abs td" style="left:677px;top:269px;width:124px;height:42px;background:#ffffff;text-align:right;"><span class="tdr">40,00 €</span></div>
<div class="abs td" style="left:802px;top:269px;width:145px;height:42px;background:#ffffff;text-align:right;"><span class="tdr">1.601,00 €</span></div>
<div class="abs td" style="left:948px;top:269px;width:191px;height:42px;background:#d9edf7;text-align:right;"><span class="tdr">288,18 €</span></div>
<div class="abs td" style="left:1140px;top:269px;width:208px;height:42px;background:#d9edf7;text-align:right;"><span class="tdr">1.312,82 €</span></div>
<div class="abs td" style="left:1349px;top:269px;width:157px;height:42px;background:#dff0d8;text-align:right;"><span class="tdr">0,00 €</span></div>
<div class="abs td" style="left:1507px;top:269px;width:177px;height:42px;background:#dff0d8;text-align:right;"><span class="tdr">1.601,00 €</span></div>
<div class="abs" style="left:0;top:311px;width:1683px;height:1px;background:#dddddd"></div>
<div class="abs td" style="left:0px;top:312px;width:270px;height:42px;background:#f9f9f9;text-align:left;"><span class="chic" style="left:8px;top:8px"><svg width="24" height="24" viewBox="0 0 24 24"><circle cx="11.3" cy="11.2" r="10.3" fill="#a9a9a9" opacity="0.75"/><circle cx="10.5" cy="10.2" r="10.3" fill="#fff"/><text x="7.9" y="16.7" text-anchor="middle" font-family="Liberation Sans" font-weight="bold" font-size="20" fill="#ff0000">A</text><text x="16" y="11" text-anchor="middle" font-family="Liberation Sans" font-weight="bold" font-size="12.5" fill="#ff0000">1</text></svg></span><span class="tdt" style="left:34px">Canale d'autore (Agenzia1)</span></div>
<div class="abs td" style="left:271px;top:312px;width:121px;height:42px;background:#f9f9f9;text-align:right;"><span class="pbtn" style="right:19.39px">Prenotazioni</span><span class="num">3</span></div>
<div class="abs td" style="left:393px;top:312px;width:145px;height:42px;background:#f9f9f9;text-align:right;"><span class="tdr">968,00 €</span></div>
<div class="abs td" style="left:539px;top:312px;width:137px;height:42px;background:#f9f9f9;text-align:right;"><span class="tdr">185,00 €</span></div>
<div class="abs td" style="left:677px;top:312px;width:124px;height:42px;background:#f9f9f9;text-align:right;"><span class="tdr">0,00 €</span></div>
<div class="abs td" style="left:802px;top:312px;width:145px;height:42px;background:#f9f9f9;text-align:right;"><span class="tdr">1.153,00 €</span></div>
<div class="abs td" style="left:948px;top:312px;width:191px;height:42px;background:#d9edf7;text-align:right;"><span class="tdr">0,00 €</span></div>
<div class="abs td" style="left:1140px;top:312px;width:208px;height:42px;background:#d9edf7;text-align:right;"><span class="tdr">1.153,00 €</span></div>
<div class="abs td" style="left:1349px;top:312px;width:157px;height:42px;background:#dff0d8;text-align:right;"><span class="tdr">0,00 €</span></div>
<div class="abs td" style="left:1507px;top:312px;width:177px;height:42px;background:#dff0d8;text-align:right;"><span class="tdr">1.153,00 €</span></div>
<div class="abs" style="left:0;top:354px;width:1683px;height:1px;background:#dddddd"></div>
<div class="abs td" style="left:0px;top:355px;width:270px;height:42px;background:#ffffff;text-align:left;"><span class="chic" style="left:8px;top:8px"><svg width="24" height="24" viewBox="0 0 24 24"><circle cx="11.3" cy="11.2" r="10.3" fill="#a9a9a9" opacity="0.75"/><circle cx="10.5" cy="10.2" r="10.3" fill="#fff"/><text x="9.9" y="16.7" text-anchor="middle" font-family="Liberation Sans" font-weight="bold" font-size="20" fill="#3d87ea">A</text></svg></span><span class="tdt" style="left:34px">MondoTravelTour (Agenzia)</span></div>
<div class="abs td" style="left:271px;top:355px;width:121px;height:42px;background:#ffffff;text-align:right;"><span class="pbtn" style="right:19.39px">Prenotazioni</span><span class="num">2</span></div>
<div class="abs td" style="left:393px;top:355px;width:145px;height:42px;background:#ffffff;text-align:right;"><span class="tdr">966,00 €</span></div>
<div class="abs td" style="left:539px;top:355px;width:137px;height:42px;background:#ffffff;text-align:right;"><span class="tdr">140,00 €</span></div>
<div class="abs td" style="left:677px;top:355px;width:124px;height:42px;background:#ffffff;text-align:right;"><span class="tdr">0,00 €</span></div>
<div class="abs td" style="left:802px;top:355px;width:145px;height:42px;background:#ffffff;text-align:right;"><span class="tdr">1.106,00 €</span></div>
<div class="abs td" style="left:948px;top:355px;width:191px;height:42px;background:#d9edf7;text-align:right;"><span class="tdr">165,90 €</span></div>
<div class="abs td" style="left:1140px;top:355px;width:208px;height:42px;background:#d9edf7;text-align:right;"><span class="tdr">940,10 €</span></div>
<div class="abs td" style="left:1349px;top:355px;width:157px;height:42px;background:#dff0d8;text-align:right;"><span class="tdr">0,00 €</span></div>
<div class="abs td" style="left:1507px;top:355px;width:177px;height:42px;background:#dff0d8;text-align:right;"><span class="tdr">1.106,00 €</span></div>
<div class="abs" style="left:0;top:397px;width:1683px;height:1px;background:#dddddd"></div>
<div class="abs td" style="left:0px;top:398px;width:270px;height:42px;background:#f9f9f9;text-align:left;"><span class="tdt" style="left:8px;color:#ff0000">NON ASSEGNATO</span></div>
<div class="abs td" style="left:271px;top:398px;width:121px;height:42px;background:#f9f9f9;text-align:right;"><span class="pbtn" style="right:19.39px">Prenotazioni</span><span class="num">2</span></div>
<div class="abs td" style="left:393px;top:398px;width:145px;height:42px;background:#f9f9f9;text-align:right;"><span class="tdr">0,00 €</span></div>
<div class="abs td" style="left:539px;top:398px;width:137px;height:42px;background:#f9f9f9;text-align:right;"><span class="tdr">0,00 €</span></div>
<div class="abs td" style="left:677px;top:398px;width:124px;height:42px;background:#f9f9f9;text-align:right;"><span class="tdr">0,00 €</span></div>
<div class="abs td" style="left:802px;top:398px;width:145px;height:42px;background:#f9f9f9;text-align:right;"><span class="tdr">0,00 €</span></div>
<div class="abs td" style="left:948px;top:398px;width:191px;height:42px;background:#d9edf7;text-align:right;"><span class="tdr">0,00 €</span></div>
<div class="abs td" style="left:1140px;top:398px;width:208px;height:42px;background:#d9edf7;text-align:right;"><span class="tdr">0,00 €</span></div>
<div class="abs td" style="left:1349px;top:398px;width:157px;height:42px;background:#dff0d8;text-align:right;"><span class="tdr">0,00 €</span></div>
<div class="abs td" style="left:1507px;top:398px;width:177px;height:42px;background:#dff0d8;text-align:right;"><span class="tdr">0,00 €</span></div>
<div class="abs" style="left:0;top:440px;width:1683px;height:1px;background:#dddddd"></div>
<div class="abs td" style="left:0px;top:441px;width:270px;height:46px;background:#e3e6e9;text-align:right;"><span class="tdb"></span></div>
<div class="abs td" style="left:271px;top:441px;width:121px;height:46px;background:#e3e6e9;text-align:right;"><span class="tdb">Totale:170</span></div>
<div class="abs td" style="left:393px;top:441px;width:145px;height:46px;background:#e3e6e9;text-align:right;"><span class="tdb">Totale:25.088,37 €</span></div>
<div class="abs td" style="left:539px;top:441px;width:137px;height:46px;background:#e3e6e9;text-align:right;"><span class="tdb">Totale:3.315,00 €</span></div>
<div class="abs td" style="left:677px;top:441px;width:124px;height:46px;background:#e3e6e9;text-align:right;"><span class="tdb">Totale:383,00 €</span></div>
<div class="abs td" style="left:802px;top:441px;width:145px;height:46px;background:#e3e6e9;text-align:right;"><span class="tdb">Totale:28.786,37 €</span></div>
<div class="abs td" style="left:948px;top:441px;width:191px;height:46px;background:#9ed0fd;text-align:right;"><span class="tdb">Totale:902,35 €</span></div>
<div class="abs td" style="left:1140px;top:441px;width:208px;height:46px;background:#9ed0fd;text-align:right;"><span class="tdb">Totale:27.884,02 €</span></div>
<div class="abs td" style="left:1349px;top:441px;width:157px;height:46px;background:#96bf97;text-align:right;"><span class="tdb">Totale:230,00 €</span></div>
<div class="abs td" style="left:1507px;top:441px;width:177px;height:46px;background:#96bf97;text-align:right;"><span class="tdb">Totale:28.556,37 €</span></div>
<div class="abs" style="left:270px;top:0;width:1px;height:487px;background:#dddddd"></div>
<div class="abs" style="left:392px;top:0;width:1px;height:487px;background:#dddddd"></div>
<div class="abs" style="left:538px;top:0;width:1px;height:487px;background:#dddddd"></div>
<div class="abs" style="left:676px;top:0;width:1px;height:487px;background:#dddddd"></div>
<div class="abs" style="left:801px;top:0;width:1px;height:487px;background:#dddddd"></div>
<div class="abs" style="left:947px;top:0;width:1px;height:487px;background:#dddddd"></div>
<div class="abs" style="left:1139px;top:0;width:1px;height:487px;background:#dddddd"></div>
<div class="abs" style="left:1348px;top:0;width:1px;height:487px;background:#dddddd"></div>
<div class="abs" style="left:1506px;top:0;width:1px;height:487px;background:#dddddd"></div>
</div>
<svg class="abs" style="left:1120px;top:376.5px" width="13" height="16" viewBox="0 0 13 16"><path d="M6.3 0.5V13.8" stroke="#333" stroke-width="1.3"/><path d="M1.2 8.8L6.3 13.8 11.4 8.8" stroke="#333" stroke-width="1.3" fill="none"/></svg>
<div class="abs" style="left:195px;top:867.8px;line-height:18px;font-weight:bold;font-size:14px;color:#333">Legenda</div>
<div class="abs" style="left:195px;top:888px;width:14.7px;height:14.8px;border-radius:2px;background:#9ed0fd"></div>
<div class="abs" style="left:214px;top:887px;line-height:18px;font-size:14px;color:#333">Commissioni calcolate in base alla percentuale inserita in canali</div>
<div class="abs" style="left:195px;top:908px;width:14.7px;height:14.8px;border-radius:2px;background:#96bf97"></div>
<div class="abs" style="left:214px;top:907px;line-height:18px;font-size:14px;color:#333">Commissioni reali inserite all'interno della prenotazione</div>
<div class="abs" style="left:1129px;top:345px;width:774px;height:523.5px;border:6px solid #e8191f;border-radius:52px;z-index:5"></div>
<div class="abs" style="left:177px;top:863px;width:457.5px;height:74.5px;border:6px solid #e8191f;border-radius:26px;z-index:5"></div>
<div class="abs" style="left:1890px;top:60px;width:40px;height:39.5px;border:1px solid #e00;border-radius:4px;background:#fff"></div>
<svg class="abs" style="left:1901px;top:71px" width="17" height="17" viewBox="0 0 17 17"><circle cx="8.5" cy="8.5" r="8.5" fill="#337ab7"/><circle cx="8.5" cy="4.3" r="1.6" fill="#fff"/><path d="M6.5 7h3v5.3h1.2v1.5H6.3v-1.5h1.2V8.5h-1z" fill="#fff"/></svg>
<div class="abs" style="left:1890px;top:175px;width:40px;height:40px;border:1px solid #5bc0de;border-radius:4px;background:#fff"></div>
<svg class="abs" style="left:1901px;top:186px" width="19" height="17" viewBox="0 0 19 17"><path d="M0 3h19v1.5l-9.5 6L0 4.5z" fill="#337ab7"/><path d="M0 6.5l9.5 6 9.5-6V16H0z" fill="#337ab7"/></svg>
<div class="abs" style="left:1888px;top:171.7px;width:27px;height:17px;border-radius:9px;background:#d9534f;color:#fff;font-weight:bold;font-size:12.5px;line-height:17.5px;text-align:center">20</div>
<div class="abs" style="left:1890px;top:225px;width:40px;height:40px;border:1px solid #5bc0de;border-radius:4px;background:#fff"></div>
<svg class="abs" style="left:1900px;top:235px" width="20" height="20" viewBox="0 0 20 20"><g transform="translate(8.3 10)"><circle r="3.9" fill="none" stroke="#337ab7" stroke-width="2.6"/><rect x="-1.3" y="-6.6" width="2.6" height="3" fill="#337ab7" transform="rotate(0)"/><rect x="-1.3" y="-6.6" width="2.6" height="3" fill="#337ab7" transform="rotate(45)"/><rect x="-1.3" y="-6.6" width="2.6" height="3" fill="#337ab7" transform="rotate(90)"/><rect x="-1.3" y="-6.6" width="2.6" height="3" fill="#337ab7" transform="rotate(135)"/><rect x="-1.3" y="-6.6" width="2.6" height="3" fill="#337ab7" transform="rotate(180)"/><rect x="-1.3" y="-6.6" width="2.6" height="3" fill="#337ab7" transform="rotate(225)"/><rect x="-1.3" y="-6.6" width="2.6" height="3" fill="#337ab7" transform="rotate(270)"/><rect x="-1.3" y="-6.6" width="2.6" height="3" fill="#337ab7" transform="rotate(315)"/></g><g transform="translate(16 4.5)" fill="#337ab7"><circle r="3"/><rect x="-1" y="-4.5" width="2" height="2" transform="rotate(0)"/><rect x="-1" y="-4.5" width="2" height="2" transform="rotate(60)"/><rect x="-1" y="-4.5" width="2" height="2" transform="rotate(120)"/><rect x="-1" y="-4.5" width="2" height="2" transform="rotate(180)"/><rect x="-1" y="-4.5" width="2" height="2" transform="rotate(240)"/><rect x="-1" y="-4.5" width="2" height="2" transform="rotate(300)"/><circle r="1.2" fill="#fff"/></g><g transform="translate(16 15.5)" fill="#337ab7"><circle r="3"/><rect x="-1" y="-4.5" width="2" height="2" transform="rotate(0)"/><rect x="-1" y="-4.5" width="2" height="2" transform="rotate(60)"/><rect x="-1" y="-4.5" width="2" height="2" transform="rotate(120)"/><rect x="-1" y="-4.5" width="2" height="2" transform="rotate(180)"/><rect x="-1" y="-4.5" width="2" height="2" transform="rotate(240)"/><rect x="-1" y="-4.5" width="2" height="2" transform="rotate(300)"/><circle r="1.2" fill="#fff"/></g></svg>
</body></html>
